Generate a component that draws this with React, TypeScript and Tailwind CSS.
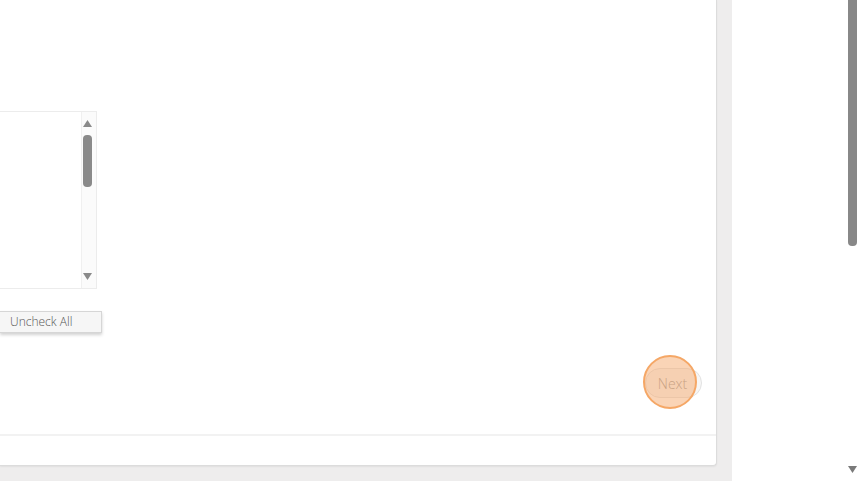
import React from "react";

export default function App() {
  return (
    <div className="w-[860px] h-[481px] bg-[#eeeded] flex overflow-hidden relative" style={{ fontFamily: '"Open Sans", "Noto Sans", sans-serif' }}>
      <div className="w-[732px] h-[481px] flex flex-col">
        <div className="w-[717px] h-[466px] bg-white border-r border-b border-[#dcdcdc] rounded-br-[4px] flex flex-col shadow-[0_1px_2px_rgba(0,0,0,0.06)]">
          <div className="h-[434px] relative">
            {/* listbox */}
            <div className="absolute left-0 top-[111px] w-[97px] h-[178px] border border-l-0 border-[#ececec] bg-white flex justify-end">
              <div className="w-[15px] h-full bg-[#fbfbfb] border-l border-[#f0f0f0] flex flex-col items-center pt-[8px] pr-[3px]">
                <svg width="9" height="7" viewBox="0 0 9 7"><path d="M4.5 0 L9 7 L0 7 Z" fill="#8a8a8a" /></svg>
                <div className="w-[9px] h-[52px] rounded-[4px] bg-[#8a8a8a] mt-[8px]" />
                <div className="flex-1" />
                <svg width="9" height="7" viewBox="0 0 9 7" className="mb-[8px]"><path d="M0 0 L9 0 L4.5 7 Z" fill="#8a8a8a" /></svg>
              </div>
            </div>
            {/* uncheck all */}
            <div className="absolute left-0 top-[311px] w-[102px] h-[22px] border border-l-0 border-[#d6d6d6] bg-[#f6f6f6] shadow-[0_2px_3px_rgba(0,0,0,0.18)] flex items-center pl-[10px] text-[12px] font-light text-[#555]">
              Uncheck All
            </div>
            {/* next */}
            <div className="absolute left-[645px] top-[368px] w-[57px] h-[30px] rounded-[15px] border border-[#e2e2e2] bg-[#f7f7f7] flex items-center justify-center pr-[2px] text-[14px] font-light text-[#999]">
              Next
            </div>
            <div className="absolute left-[643px] top-[355px] w-[54px] h-[54px] rounded-full bg-[rgba(246,170,110,0.5)] border-2 border-[#f5a766]" />
          </div>
          <div className="h-[2px] bg-[#f2f2f2]" />
          <div className="flex-1" />
        </div>
      </div>
      <div className="flex-1 h-[481px] bg-white relative">
        <div className="absolute right-[3px] top-0 w-[9px] h-[246px] bg-[#888888] rounded-b-[4px]" />
        <svg width="9" height="7" viewBox="0 0 9 7" className="absolute right-[3px] top-[466px]"><path d="M0 0 L9 0 L4.5 7 Z" fill="#7a7a7a" /></svg>
      </div>
    </div>
  );
}
